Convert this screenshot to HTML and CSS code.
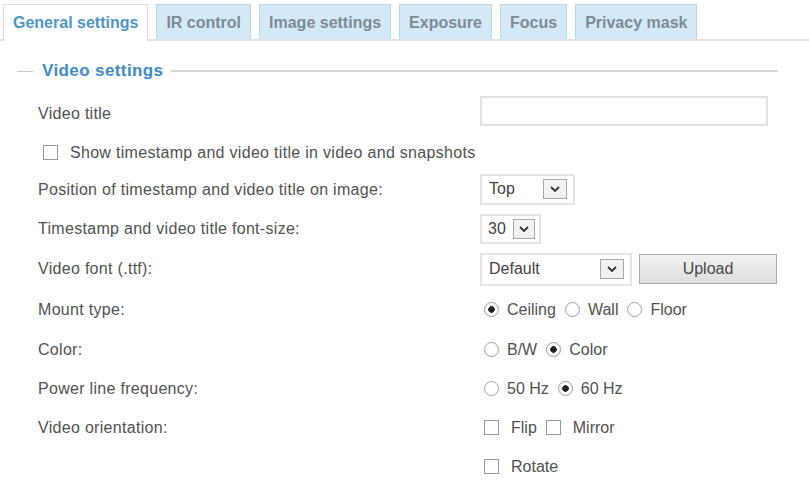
FILE: index.html
```html
<!DOCTYPE html>
<html>
<head>
<meta charset="utf-8">
<link rel="stylesheet" href="styles.css">
</head>
<body>
<div class="page">
  <div class="tabs">
    <div class="tab active">General settings</div>
    <div class="tab">IR control</div>
    <div class="tab">Image settings</div>
    <div class="tab">Exposure</div>
    <div class="tab">Focus</div>
    <div class="tab">Privacy mask</div>
  </div>
  <div class="panel">
    <div class="legend">
      <span class="dash"></span>
      <span class="legend-text">Video settings</span>
      <span class="line"></span>
    </div>

    <div class="row h41">
      <span class="label">Video title</span>
      <div class="ctrl"><input class="text-input" type="text"></div>
    </div>

    <div class="row-check h37">
      <span class="cb"></span>
      <span class="check-text">Show timestamp and video title in video and snapshots</span>
    </div>

    <div class="row h38">
      <span class="label">Position of timestamp and video title on image:</span>
      <div class="ctrl">
        <div class="select sel-top"><span class="sel-val">Top</span><span class="arrow"><svg viewBox="0 0 10 6" width="10" height="6"><path d="M1 1 L5 5 L9 1" fill="none" stroke="#333" stroke-width="1.8"/></svg></span></div>
      </div>
    </div>

    <div class="row h40">
      <span class="label">Timestamp and video title font-size:</span>
      <div class="ctrl">
        <div class="select sel-size"><span class="sel-val">30</span><span class="arrow"><svg viewBox="0 0 10 6" width="10" height="6"><path d="M1 1 L5 5 L9 1" fill="none" stroke="#333" stroke-width="1.8"/></svg></span></div>
      </div>
    </div>

    <div class="row h40">
      <span class="label">Video font (.ttf):</span>
      <div class="ctrl">
        <div class="select sel-font"><span class="sel-val">Default</span><span class="arrow"><svg viewBox="0 0 10 6" width="10" height="6"><path d="M1 1 L5 5 L9 1" fill="none" stroke="#333" stroke-width="1.8"/></svg></span></div>
        <div class="btn">Upload</div>
      </div>
    </div>

    <div class="row h41">
      <span class="label">Mount type:</span>
      <div class="ctrl opts">
        <span class="opt"><span class="radio on"></span>Ceiling</span>
        <span class="opt"><span class="radio"></span>Wall</span>
        <span class="opt"><span class="radio"></span>Floor</span>
      </div>
    </div>

    <div class="row">
      <span class="label">Color:</span>
      <div class="ctrl opts">
        <span class="opt"><span class="radio"></span>B/W</span>
        <span class="opt"><span class="radio on"></span>Color</span>
      </div>
    </div>

    <div class="row">
      <span class="label">Power line frequency:</span>
      <div class="ctrl opts">
        <span class="opt"><span class="radio"></span>50 Hz</span>
        <span class="opt"><span class="radio on"></span>60 Hz</span>
      </div>
    </div>

    <div class="row">
      <span class="label">Video orientation:</span>
      <div class="ctrl opts">
        <span class="opt"><span class="cb"></span>Flip</span>
        <span class="opt"><span class="cb"></span>Mirror</span>
      </div>
    </div>

    <div class="row">
      <span class="label"></span>
      <div class="ctrl opts">
        <span class="opt"><span class="cb"></span>Rotate</span>
      </div>
    </div>
  </div>
</div>
</body>
</html>
```

FILE: styles.css
```css
html, body {
  margin: 0;
  padding: 0;
  background: #fff;
}
body {
  font-family: "Liberation Sans", Arial, sans-serif;
  font-size: 16px;
  color: #525252;
}
.page {
  width: 809px;
  height: 481px;
  overflow: hidden;
}
.tabs {
  display: flex;
  gap: 8px;
  padding: 4px 0 0 3px;
  border-bottom: 2px solid #e2e2e2;
  height: 35px;
}
.tab {
  display: flex;
  align-items: center;
  padding: 1px 9px 0;
  font-weight: bold;
  font-size: 16px;
  color: #7d8b96;
  background: #d3e9f8;
  border: 1px solid #bdd5e6;
  border-bottom: none;
  box-sizing: border-box;
  height: 35px;
}
.tab.active {
  background: #fff;
  color: #4d96c6;
  border-color: #dcdcdc;
  height: 37px;
  margin-bottom: -2px;
  padding-bottom: 2px;
}
.legend {
  display: flex;
  align-items: center;
  height: 40px;
  margin-top: 10px;
  padding-left: 17px;
  padding-right: 31px;
}
.dash {
  width: 16px;
  height: 1px;
  background: #c8c8c8;
}
.legend-text {
  font-weight: bold;
  font-size: 17px;
  letter-spacing: 0.4px;
  color: #3e8bcb;
  margin: 0 8px 0 9px;
}
.line {
  flex: 1;
  height: 2px;
  background: #d8d8d8;
}
.row {
  display: grid;
  grid-template-columns: 442px auto;
  align-items: center;
  height: 39px;
  padding-left: 38px;
}
.h37 { height: 37px; }
.h38 { height: 38px; }
.h40 { height: 40px; }
.h41 { height: 41px; }
.legend + .row { margin-top: 2px; }
.label {
  white-space: nowrap;
  letter-spacing: 0.3px;
}
.ctrl {
  display: flex;
  align-items: center;
}
.text-input {
  width: 288px;
  height: 30px;
  box-sizing: border-box;
  border: 2px solid #e2e2e2;
  background: #fff;
  margin: 0 0 5px 0;
  padding: 0;
}
.row-check {
  display: flex;
  align-items: center;
  padding-left: 43px;
}
.row-check .cb {
  margin-right: 12px;
}
.check-text {
  letter-spacing: 0.3px;
}
.cb {
  display: inline-block;
  width: 15px;
  height: 15px;
  box-sizing: border-box;
  border: 1px solid #9a9a9a;
  background: #fff;
}
.select {
  display: flex;
  align-items: center;
  justify-content: space-between;
  box-sizing: border-box;
  border: 2px solid #e4e4e4;
  background: #fff;
  padding: 0 6px 0 7px;
}
.sel-top { width: 95px; height: 31px; margin-bottom: 2px; }
.sel-size { width: 61px; height: 30px; padding: 0 4px 0 6px; }
.sel-font { width: 152px; height: 33px; }
.sel-val {
  color: #444;
}
.arrow {
  display: flex;
  align-items: center;
  justify-content: center;
  width: 24px;
  height: 20px;
  box-sizing: border-box;
  border: 1px solid #a8a8a8;
  background: #f2f2f2;
}
.sel-size .arrow { width: 22px; }
.btn {
  margin-left: 7px;
  width: 138px;
  height: 30px;
  box-sizing: border-box;
  border: 1px solid #a9a9a9;
  background: linear-gradient(#f1f1f1, #dedede);
  display: flex;
  align-items: center;
  justify-content: center;
  color: #484848;
}
.opts {
  padding-left: 4px;
}
.opt {
  display: inline-flex;
  align-items: center;
  margin-right: 9px;
}
.radio {
  display: inline-block;
  width: 15px;
  height: 15px;
  box-sizing: border-box;
  border: 1px solid #a0a0a0;
  border-radius: 50%;
  background: #fff;
  margin-right: 8px;
}
.radio.on {
  background: radial-gradient(circle, #222 0 3px, #fff 3.5px);
  border-color: #9a9a9a;
}
.opts .cb {
  margin-right: 12px;
}
```
